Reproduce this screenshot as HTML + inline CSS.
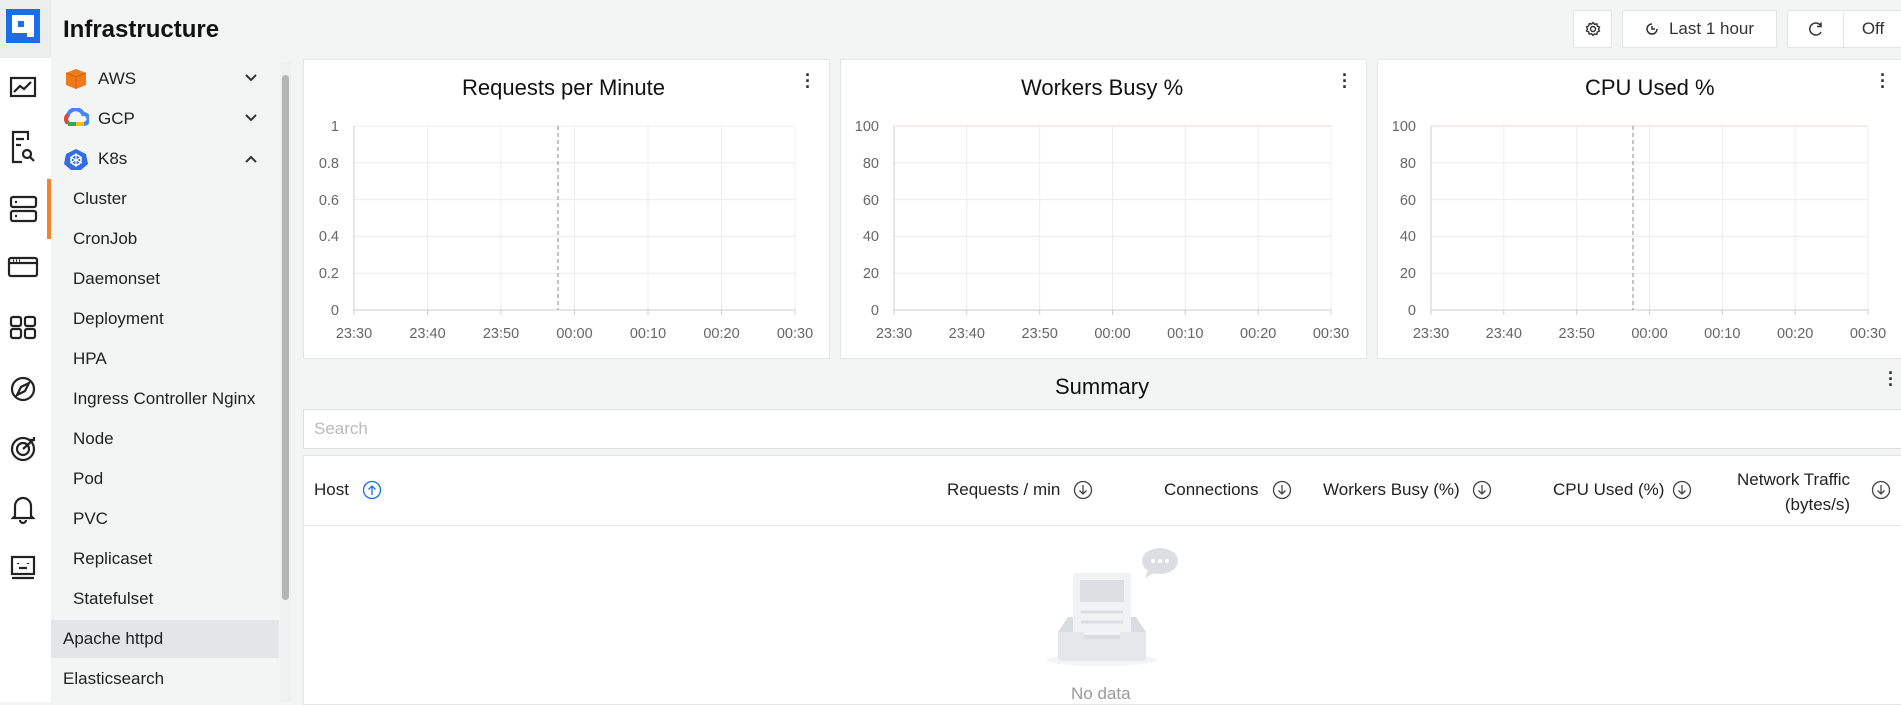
<!DOCTYPE html>
<html><head><meta charset="utf-8"><style>
*{box-sizing:border-box;margin:0;padding:0}
body{width:1901px;height:702px;overflow:hidden;background:#f3f4f4;font-family:"Liberation Sans",sans-serif;color:#222;position:relative}
.a{position:absolute}
.nav{font-size:17px;color:#222}
.btn{position:absolute;background:#fff;border:1px solid #e2e4e5;border-radius:2px;top:10px;height:38px;display:flex;align-items:center;justify-content:center;font-size:17px;color:#333}
.panel{position:absolute;background:#fff;border:1px solid #e3e5e6;top:59px;height:300px}
.ttl{position:absolute;font-size:22px;color:#111;top:75px;white-space:nowrap}
.dots{position:absolute;font-size:18px;font-weight:bold;color:#333;line-height:6px;width:4px}
.th{position:absolute;font-size:17px;color:#222;white-space:nowrap}
</style></head><body>
<div class="a" style="left:0;top:0;width:51px;height:58px;background:#eceeee"></div>
<svg class="a" style="left:5px;top:8px" width="36" height="36" viewBox="0 0 36 36"><rect x="1" y="1" width="34" height="34" fill="#1a6ee6"/><rect x="7" y="7" width="22" height="18" fill="#fff"/><rect x="13" y="13" width="6" height="6" fill="#1a6ee6"/><rect x="22" y="25" width="7" height="4" fill="#fff"/></svg>
<div class="a" style="left:0;top:58px;width:51px;height:644px;background:#fff"></div>
<svg class="a" style="left:0;top:58px" width="51" height="560" fill="none" stroke="#222" stroke-width="2.2">
<g transform="translate(0,-58)">
<rect x="11" y="78" width="24" height="18"/><path d="M14 92l6-6 4 3 7-7"/>
<path d="M28 140V132H13V162h9M16 139h8M16 145h5"/><circle cx="27" cy="154" r="4"/><path d="M30 157l4 4"/>
<rect x="11" y="197" width="25" height="10" rx="2"/><rect x="11" y="211" width="25" height="10" rx="2"/><path d="M15 202h2M15 216h2"/>
<rect x="9" y="258" width="28" height="18" rx="2"/><path d="M9 263h28M13 260.5h1M16 260.5h1M19 260.5h1"/>
<rect x="11" y="317" width="10" height="9" rx="2"/><rect x="25" y="317" width="10" height="9" rx="2"/><rect x="11" y="329" width="10" height="9" rx="2"/><rect x="25" y="329" width="10" height="9" rx="2"/>
<circle cx="23" cy="389" r="11"/><path d="M17 395l4-8 8-4-4 8z"/>
<circle cx="23" cy="449" r="11"/><circle cx="23" cy="449" r="6"/><path d="M23 449l10-9M30 440h4v-3"/>
<path d="M15 516v-10a8 8 0 0116 0v10l2 2H13zM20 520a3 3 0 006 0"/>
<rect x="12" y="557" width="22" height="17"/><path d="M12 578h22M18 563v1M28 563v1M19 568h8"/>
</g></svg>
<div class="a" style="left:63px;top:16px;font-size:24px;font-weight:bold;color:#111">Infrastructure</div>
<div class="a" style="left:51px;top:58px;width:228px;height:644px;background:#f3f4f4"></div>
<div class="a" style="left:280px;top:62px;width:11px;height:640px;background:#f0f0f0"></div>
<div class="a" style="left:282px;top:75px;width:7px;height:525px;background:#b5b5b5;border-radius:4px"></div>
<div class="a" style="left:47px;top:179px;width:4px;height:60px;background:#f0852d"></div>
<svg class="a" style="left:64px;top:68px" width="24" height="22"><path d="M2 5l10-4 10 4v12l-10 4-10-4z" fill="#f07a1a"/><path d="M2 5l10 4 10-4M12 9v12" stroke="#d85f0a" fill="none"/></svg>
<svg class="a" style="left:63px;top:108px" width="26" height="20"><path d="M5 15a5 5 0 010-8 8 8 0 0115-1 5 5 0 011 10" fill="none" stroke="#4285f4" stroke-width="4"/><path d="M5 15a5 5 0 010-8" fill="none" stroke="#ea4335" stroke-width="4"/><path d="M5 16h8" stroke="#34a853" stroke-width="4"/><path d="M13 16h8" stroke="#fbbc05" stroke-width="4"/></svg>
<svg class="a" style="left:64px;top:148px" width="24" height="22"><path d="M12 1l10 5 2 10-7 6H7L0 16 2 6z" fill="#326ce5"/><circle cx="12" cy="12" r="5" fill="none" stroke="#fff" stroke-width="1.5"/><path d="M12 5v14M6 9l12 6M6 15l12-6" stroke="#fff" stroke-width="1.2"/></svg>
<div class="a nav" style="left:98px;top:69px">AWS</div>
<div class="a nav" style="left:98px;top:109px">GCP</div>
<div class="a nav" style="left:98px;top:149px">K8s</div>
<svg class="a" style="left:244px;top:70px" width="14" height="100" fill="none" stroke="#333" stroke-width="2"><path d="M2 5l5 5 5-5M2 45l5 5 5-5M2 92l5-5 5 5"/></svg>
<div class="a nav" style="left:73px;top:189px">Cluster</div>
<div class="a nav" style="left:73px;top:229px">CronJob</div>
<div class="a nav" style="left:73px;top:269px">Daemonset</div>
<div class="a nav" style="left:73px;top:309px">Deployment</div>
<div class="a nav" style="left:73px;top:349px">HPA</div>
<div class="a nav" style="left:73px;top:389px">Ingress Controller Nginx</div>
<div class="a nav" style="left:73px;top:429px">Node</div>
<div class="a nav" style="left:73px;top:469px">Pod</div>
<div class="a nav" style="left:73px;top:509px">PVC</div>
<div class="a nav" style="left:73px;top:549px">Replicaset</div>
<div class="a nav" style="left:73px;top:589px">Statefulset</div>
<div class="a" style="left:51px;top:620px;width:228px;height:38px;background:#e4e5e6"></div>
<div class="a nav" style="left:63px;top:629px">Apache httpd</div>
<div class="a nav" style="left:63px;top:669px">Elasticsearch</div>
<div class="btn" style="left:1573px;width:39px"><svg width="16" height="16" viewBox="0 0 16 16" fill="none" stroke="#333" stroke-width="1.4"><circle cx="8" cy="8" r="2.5"/><path d="M8 1.5l1.5 1.8 2.3-.5.5 2.3 2.2 1-1 2 1 2-2.2 1-.5 2.3-2.3-.5L8 14.5l-1.5-1.8-2.3.5-.5-2.3-2.2-1 1-2-1-2 2.2-1 .5-2.3 2.3.5z"/></svg></div>
<div class="btn" style="left:1622px;width:155px"><svg width="14" height="14" viewBox="0 0 14 14" fill="none" stroke="#333" stroke-width="1.5" style="margin-right:10px"><path d="M12 7A5 5 0 1 1 7 2"/><path d="M7 4v3h3"/></svg>Last 1 hour</div>
<div class="btn" style="left:1787px;width:57px;border-right:none"><svg width="16" height="16" viewBox="0 0 16 16" fill="none" stroke="#333" stroke-width="1.5"><path d="M13 5A6 6 0 1 0 13 11"/><path d="M13 1.5v4h-4"/></svg></div>
<div class="btn" style="left:1843px;width:60px">Off</div>
<div class="panel" style="left:303px;width:527px"></div>
<div class="panel" style="left:840px;width:527px"></div>
<div class="panel" style="left:1377px;width:530px"></div>
<div class="ttl" style="left:462px">Requests per Minute</div>
<div class="ttl" style="left:1021px">Workers Busy %</div>
<div class="ttl" style="left:1585px">CPU Used %</div>
<div class="dots" style="left:805px;top:72px">·<br>·<br>·</div>
<div class="dots" style="left:1342px;top:72px">·<br>·<br>·</div>
<div class="dots" style="left:1880px;top:72px">·<br>·<br>·</div>
<svg class="a" style="left:0;top:0" width="1901" height="702" font-family="Liberation Sans, sans-serif" font-size="14.5">
<g stroke="#ececec" stroke-width="1" fill="none">
<path d="M354 162.8H795M354 199.6H795M354 236.4H795M354 273.2H795M354 126H795M427.5 126V310M501 126V310M574.5 126V310M648 126V310M721.5 126V310M795 126V310"/>
<path d="M894 162.8H1331M894 199.6H1331M894 236.4H1331M894 273.2H1331M966.8 126V310M1039.7 126V310M1112.5 126V310M1185.3 126V310M1258.2 126V310M1331 126V310"/>
<path d="M1431 162.8H1868M1431 199.6H1868M1431 236.4H1868M1431 273.2H1868M1503.8 126V310M1576.7 126V310M1649.5 126V310M1722.3 126V310M1795.2 126V310M1868 126V310"/>
</g>
<path d="M894 126H1331M1431 126H1868" stroke="#ecd8d8" fill="none"/>
<g stroke="#ccc" fill="none"><path d="M354 126V310H795M894 126V310H1331M1431 126V310H1868M354 310v5M427.5 310v5M501 310v5M574.5 310v5M648 310v5M721.5 310v5M795 310v5M894 310v5M966.8 310v5M1039.7 310v5M1112.5 310v5M1185.3 310v5M1258.2 310v5M1331 310v5M1431 310v5M1503.8 310v5M1576.7 310v5M1649.5 310v5M1722.3 310v5M1795.2 310v5M1868 310v5"/></g>
<path d="M558 126V310M1633 126V310" stroke="#888" stroke-dasharray="4,3" fill="none"/>
<g text-anchor="end" fill="#666">
<text x="339" y="131">1</text><text x="339" y="168">0.8</text><text x="339" y="205">0.6</text><text x="339" y="241">0.4</text><text x="339" y="278">0.2</text><text x="339" y="315">0</text>
<text x="879" y="131">100</text><text x="879" y="168">80</text><text x="879" y="205">60</text><text x="879" y="241">40</text><text x="879" y="278">20</text><text x="879" y="315">0</text>
<text x="1416" y="131">100</text><text x="1416" y="168">80</text><text x="1416" y="205">60</text><text x="1416" y="241">40</text><text x="1416" y="278">20</text><text x="1416" y="315">0</text>
</g>
<g text-anchor="middle" fill="#666">
<text x="354" y="338">23:30</text><text x="427.5" y="338">23:40</text><text x="501" y="338">23:50</text><text x="574.5" y="338">00:00</text><text x="648" y="338">00:10</text><text x="721.5" y="338">00:20</text><text x="795" y="338">00:30</text>
<text x="894" y="338">23:30</text><text x="966.8" y="338">23:40</text><text x="1039.7" y="338">23:50</text><text x="1112.5" y="338">00:00</text><text x="1185.3" y="338">00:10</text><text x="1258.2" y="338">00:20</text><text x="1331" y="338">00:30</text>
<text x="1431" y="338">23:30</text><text x="1503.8" y="338">23:40</text><text x="1576.7" y="338">23:50</text><text x="1649.5" y="338">00:00</text><text x="1722.3" y="338">00:10</text><text x="1795.2" y="338">00:20</text><text x="1868" y="338">00:30</text>
</g>
</svg>
<div class="ttl" style="left:1055px;top:374px">Summary</div>
<div class="dots" style="left:1888px;top:370px">·<br>·<br>·</div>
<div class="a" style="left:303px;top:409px;width:1600px;height:40px;background:#fff;border:1px solid #dcdfe0"></div>
<div class="a" style="left:314px;top:419px;font-size:17px;color:#bbb">Search</div>
<div class="a" style="left:303px;top:455px;width:1600px;height:250px;background:#fff;border:1px solid #e3e5e6"></div>
<div class="a" style="left:303px;top:525px;width:1600px;height:1px;background:#e6e8e9"></div>
<div class="th" style="left:314px;top:480px">Host</div>
<div class="th" style="left:947px;top:480px">Requests / min</div>
<div class="th" style="left:1164px;top:480px">Connections</div>
<div class="th" style="left:1323px;top:480px">Workers Busy (%)</div>
<div class="th" style="left:1553px;top:480px">CPU Used (%)</div>
<div class="th" style="left:1737px;top:467px;text-align:right;line-height:25px">Network Traffic<br>(bytes/s)</div>
<svg class="a" style="left:0;top:0" width="1901" height="702" fill="none" stroke-width="1.3">
<g stroke="#1a6ee6"><circle cx="372" cy="490" r="8.5"/><path d="M372 495v-9M368.5 489.5l3.5-3.5 3.5 3.5"/></g>
<g stroke="#444">
<circle cx="1083" cy="490" r="8.5"/><path d="M1083 485v9M1079.5 490.5l3.5 3.5 3.5-3.5"/>
<circle cx="1282" cy="490" r="8.5"/><path d="M1282 485v9M1278.5 490.5l3.5 3.5 3.5-3.5"/>
<circle cx="1482" cy="490" r="8.5"/><path d="M1482 485v9M1478.5 490.5l3.5 3.5 3.5-3.5"/>
<circle cx="1682" cy="490" r="8.5"/><path d="M1682 485v9M1678.5 490.5l3.5 3.5 3.5-3.5"/>
<circle cx="1881" cy="490" r="8.5"/><path d="M1881 485v9M1877.5 490.5l3.5 3.5 3.5-3.5"/>
</g>
<ellipse cx="1102" cy="660" rx="55" ry="6" fill="#f3f4f5"/>
<path d="M1058 632l10-15h68l10 15v25a4 4 0 01-4 4h-80a4 4 0 01-4-4z" fill="#d9dce1"/>
<rect x="1073" y="573" width="58" height="62" fill="#f1f2f4"/>
<rect x="1080" y="580" width="44" height="22" fill="#dcdee2"/>
<path d="M1081 612h42M1081 622h42" stroke="#dcdee2" stroke-width="3"/>
<path d="M1058 632h26v7h36v-7h26v25a4 4 0 01-4 4h-80a4 4 0 01-4-4z" fill="#e5e7ea"/>
<ellipse cx="1160" cy="561" rx="18" ry="13" fill="#dcdee2"/><path d="M1148 570l-3 8 9-5z" fill="#dcdee2"/>
<g fill="#fff"><circle cx="1153" cy="561" r="2"/><circle cx="1160" cy="561" r="2"/><circle cx="1167" cy="561" r="2"/></g>
</svg>
<div class="a" style="left:1071px;top:684px;font-size:17px;color:#999">No data</div>
</body></html>
